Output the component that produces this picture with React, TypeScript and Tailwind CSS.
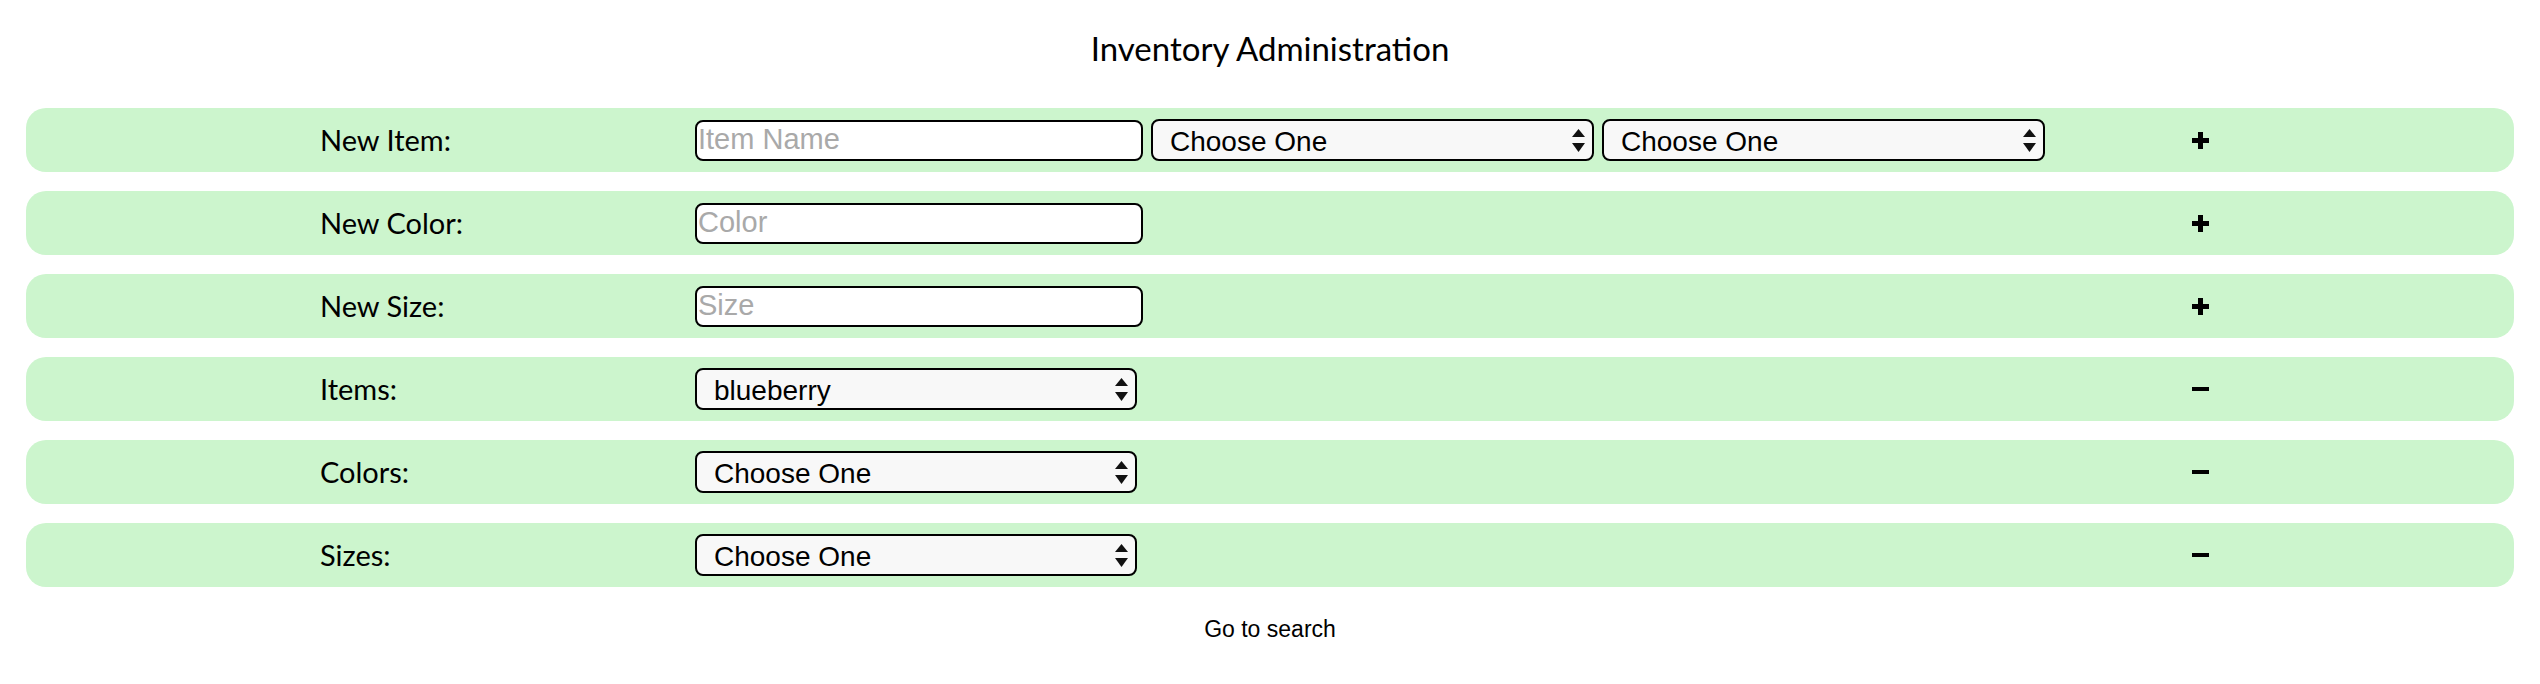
import { ReactNode } from "react";

const LABEL_FONT = { fontFamily: "Lato, 'Open Sans', sans-serif" };
const FIELD_FONT = { fontFamily: "'Liberation Sans', Arial, sans-serif" };

function SelectArrows() {
  return (
    <svg
      viewBox="0 0 13 23"
      className="pointer-events-none absolute right-[9px] top-[10px] h-[23px] w-[13px]"
    >
      <path d="M6.5 0 L13 8 L0 8 Z" fill="#111" />
      <path d="M0 14 L13 14 L6.5 23 Z" fill="#111" />
    </svg>
  );
}

function Select({ value, width = "w-[443px]" }: { value: string; width?: string }) {
  return (
    <div className={`relative h-[42px] shrink-0 ${width}`}>
      <select
        defaultValue={value}
        className="h-full w-full appearance-none rounded-[8px] border-2 border-black bg-[#f8f8f8] pl-[17px] text-[28px] text-black outline-none"
        style={FIELD_FONT}
      >
        <option>{value}</option>
      </select>
      <SelectArrows />
    </div>
  );
}

function TextInput({ placeholder }: { placeholder: string }) {
  return (
    <input
      placeholder={placeholder}
      className="h-[41px] w-[448px] shrink-0 rounded-[8px] border-2 border-black bg-white px-[1px] text-[29px] text-black outline-none placeholder:text-[#a9a9a9]"
      style={FIELD_FONT}
    />
  );
}

function PlusSign() {
  return (
    <div className="relative h-[17px] w-[17px]">
      <div className="absolute left-0 top-[6px] h-[5px] w-[17px] bg-black" />
      <div className="absolute left-[6px] top-0 h-[17px] w-[5px] bg-black" />
    </div>
  );
}

function MinusSign() {
  return <div className="h-[4px] w-[17px] bg-black" />;
}

function Row({ label, children, sign }: { label: string; children: ReactNode; sign: "plus" | "minus" }) {
  return (
    <div className="flex h-[64px] items-center rounded-[20px] bg-[#ccf5cd] pl-[294px]">
      <div className="w-[375px] shrink-0 text-[29px] text-black" style={LABEL_FONT}>
        {label}
      </div>
      <div className="flex w-[1497px] shrink-0 items-center gap-[8px]">{children}</div>
      <button className="flex h-[20px] w-[17px] items-center justify-center">
        {sign === "plus" ? <PlusSign /> : <MinusSign />}
      </button>
    </div>
  );
}

export default function App() {
  return (
    <div className="min-h-screen w-full bg-white">
      <h1
        className="pt-[30px] text-center text-[33px] leading-[36px] text-black"
        style={LABEL_FONT}
      >
        Inventory Administration
      </h1>

      <div className="mt-[42px] flex flex-col gap-[19px] px-[26px]">
        <Row label="New Item:" sign="plus">
          <TextInput placeholder="Item Name" />
          <Select value="Choose One" />
          <Select value="Choose One" />
        </Row>
        <Row label="New Color:" sign="plus">
          <TextInput placeholder="Color" />
        </Row>
        <Row label="New Size:" sign="plus">
          <TextInput placeholder="Size" />
        </Row>
        <Row label="Items:" sign="minus">
          <Select value="blueberry" width="w-[442px]" />
        </Row>
        <Row label="Colors:" sign="minus">
          <Select value="Choose One" width="w-[442px]" />
        </Row>
        <Row label="Sizes:" sign="minus">
          <Select value="Choose One" width="w-[442px]" />
        </Row>
      </div>

      <div className="mt-[28px] text-center text-[23px] leading-[28px] text-black" style={FIELD_FONT}>
        <a className="cursor-pointer">Go to search</a>
      </div>
    </div>
  );
}
